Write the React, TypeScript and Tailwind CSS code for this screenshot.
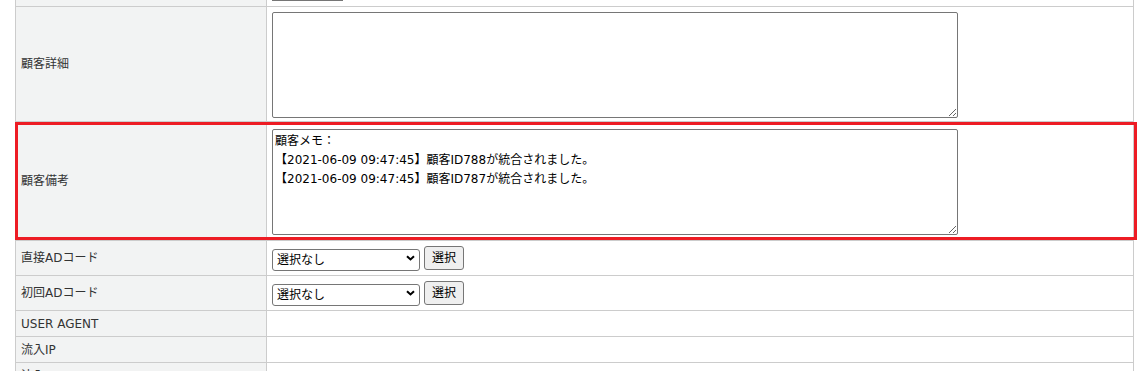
import React from 'react';

const memo =
  '顧客メモ：\n【2021-06-09 09:47:45】顧客ID788が統合されました。\n【2021-06-09 09:47:45】顧客ID787が統合されました。';

function Row({ label, h, children }: { label: string; h: string; children?: React.ReactNode }) {
  return (
    <div className={`flex border-b border-[#cccccc] ${h}`}>
      <div className="w-[251px] shrink-0 border-r border-[#cccccc] bg-[#f2f3f3] flex items-center pl-[5px] text-[12px] text-[#333333]">
        {label}
      </div>
      <div className="flex-1 pl-[5px] flex items-center">{children}</div>
    </div>
  );
}

function AdSelect() {
  return (
    <div className="flex items-center gap-[4px]">
      <div className="relative w-[148px] h-[22px]">
        <select className="appearance-none w-full h-full border border-[#767676] rounded-[3px] bg-white pl-[4px] text-[12px] text-black">
          <option>選択なし</option>
        </select>
        <svg className="absolute right-[5px] top-[8px] pointer-events-none" width="9" height="6" viewBox="0 0 9 6">
          <path d="M1 1.2 L4.5 4.5 L8 1.2" fill="none" stroke="#000" strokeWidth="2" />
        </svg>
      </div>
      <button className="w-[40px] h-[24px] bg-[#efefef] border border-[#767676] rounded-[3px] text-[12px] text-black">
        選択
      </button>
    </div>
  );
}

export default function App() {
  return (
    <div className="relative w-[1145px] h-[371px] overflow-hidden bg-white pl-[15px] font-['DejaVu_Sans','Noto_Sans_CJK_JP',sans-serif]">
      <div className="w-[1119px] border-x border-[#cccccc]">
        <div className="flex border-b border-[#cccccc] h-[7px]">
          <div className="w-[251px] shrink-0 border-r border-[#cccccc] bg-[#f2f3f3]" />
          <div className="flex-1 pl-[5px]">
            <div className="w-[71px] h-px bg-[#767676]" />
          </div>
        </div>

        <div className="flex border-b border-[#cccccc] h-[115px]">
          <div className="w-[251px] shrink-0 border-r border-[#cccccc] bg-[#f2f3f3] flex items-center pl-[5px] text-[12px] text-[#333333]">
            顧客詳細
          </div>
          <div className="flex-1 pl-[5px] pt-[5px]">
            <textarea readOnly className="block w-[686px] h-[106px] border border-[#767676] rounded-[2px] p-[2px] text-[12px] leading-[19px]" />
          </div>
        </div>

        <div className="flex border-b border-[#cccccc] h-[119px]">
          <div className="w-[251px] shrink-0 border-r border-[#cccccc] bg-[#f2f3f3] flex items-center pl-[5px] text-[12px] text-[#333333]">
            顧客備考
          </div>
          <div className="flex-1 pl-[5px] pt-[7px]">
            <textarea
              readOnly
              value={memo}
              className="block w-[686px] h-[106px] border border-[#767676] rounded-[2px] p-[2px] text-[12px] leading-[19px] text-black"
            />
          </div>
        </div>

        <Row label="直接ADコード" h="h-[35px]">
          <AdSelect />
        </Row>
        <Row label="初回ADコード" h="h-[35px]">
          <AdSelect />
        </Row>
        <Row label="USER AGENT" h="h-[26px]" />
        <Row label="流入IP" h="h-[26px]" />
        <Row label="流入URL" h="h-[26px]" />
      </div>

      <div className="absolute left-[15px] top-[122px] w-[1122px] h-[118px] border-[3px] border-[#ed1c24] pointer-events-none" />
    </div>
  );
}
